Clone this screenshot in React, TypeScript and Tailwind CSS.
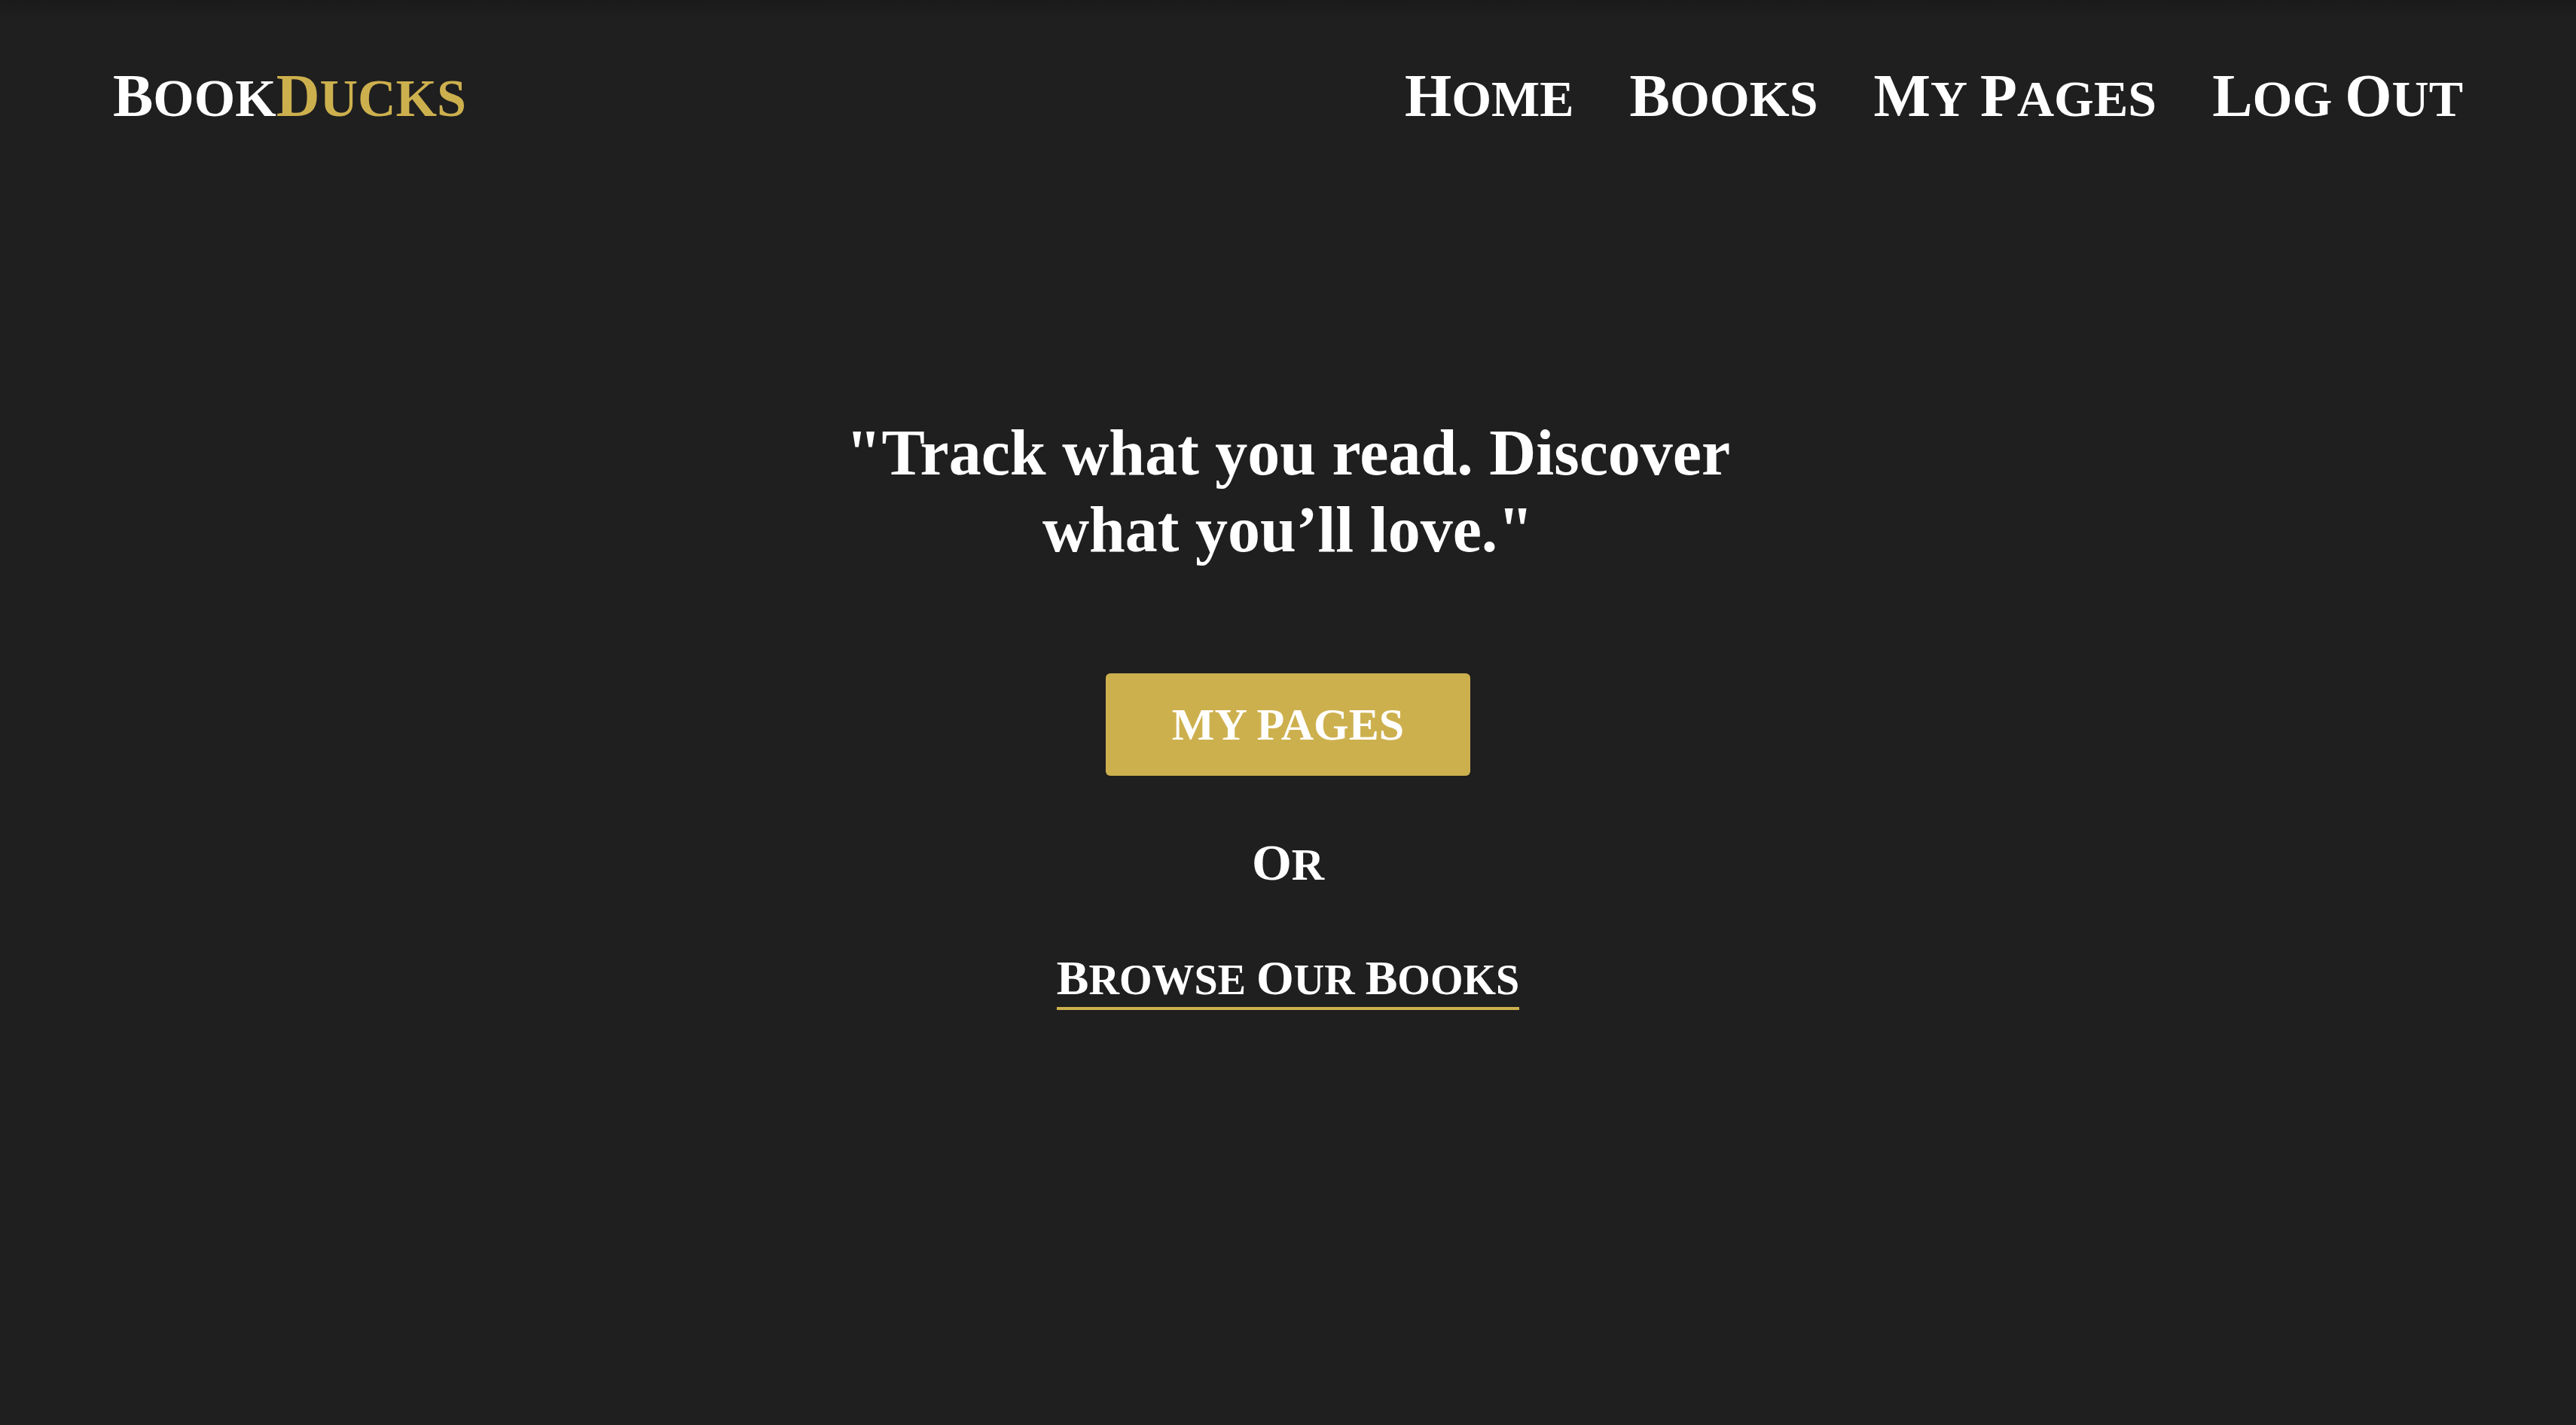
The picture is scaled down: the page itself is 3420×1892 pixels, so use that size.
import { Fragment } from "react";

const navItems = ["Home", "Books", "My Pages", "Log Out"];

/** Sets each word in capitals with a slightly larger initial. */
function Caps({ text, word }: { text: string; word: string }) {
  return (
    <>
      {text.split(" ").map((part, i) => (
        <Fragment key={part}>
          {i > 0 && " "}
          <span className={`inline-block uppercase ${word}`}>{part}</span>
        </Fragment>
      ))}
    </>
  );
}

const navWord = "first-letter:text-[80px]";

export default function App() {
  return (
    <div className="min-h-screen bg-[#1f1f1f] bg-[linear-gradient(to_bottom,#1a1a1a,#1f1f1f_24px)] font-['Liberation_Serif',serif] font-bold text-white">
      <header className="flex items-center justify-between px-[150px] py-[79px] leading-[96px]">
        <a href="#home" className="flex text-[70px]">
          <Caps text="Book" word={navWord} />
          <span className="text-[#cdb04e]">
            <Caps text="Ducks" word={navWord} />
          </span>
        </a>
        <nav className="flex gap-[74px] text-[68px]">
          {navItems.map((item) => (
            <a key={item} href="#" className="whitespace-nowrap">
              <Caps text={item} word={navWord} />
            </a>
          ))}
        </nav>
      </header>

      <main className="flex flex-col items-center pt-[292px] text-center">
        <h1 className="max-w-[1240px] text-[86px] leading-[102px]">
          "Track what you read. Discover what you’ll love."
        </h1>
        <button
          type="button"
          className="mt-[140px] rounded-md bg-[#cdb04e] px-[88px] py-8 text-[60px] leading-[72px]"
        >
          MY PAGES
        </button>
        <p className="mt-[75px] text-[60px] leading-[80px]">
          <Caps text="Or" word="first-letter:text-[68px]" />
        </p>
        <a
          href="#books"
          className="mt-[75px] border-b-4 border-[#cdb04e] text-[56px] leading-[72px]"
        >
          <Caps text="Browse Our Books" word="first-letter:text-[64px]" />
        </a>
      </main>
    </div>
  );
}
